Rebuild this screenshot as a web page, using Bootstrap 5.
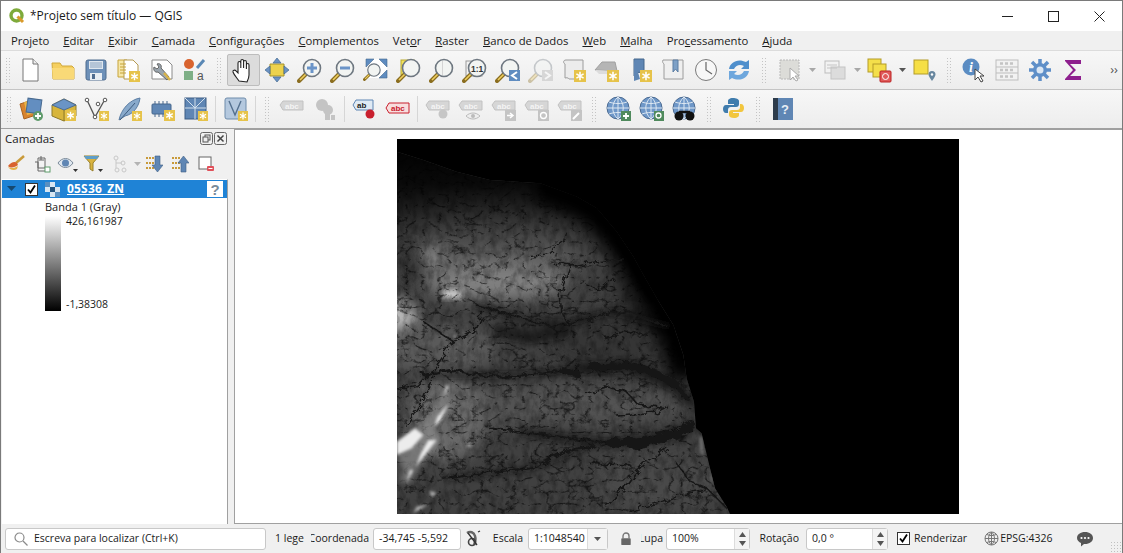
<!DOCTYPE html>
<html lang="pt">
<head>
  <meta charset="UTF-8">
  <title>*Projeto sem título — QGIS</title>
  <link href="https://cdn.jsdelivr.net/npm/bootstrap@5.3.0/dist/css/bootstrap.min.css" rel="stylesheet">
  <style>
    html, body { height: 100%; }
    body {
      background: #f0f0f0;
      font-family: "Open Sans", "Noto Sans", sans-serif;
      font-size: 11px;
      color: #1a1a1a;
      overflow: hidden;
    }
    .qgis-win { height: 553px; border: 1px solid #7a7a7a; border-bottom: 0; }
    .title-bar { height: 30px; background: #fff; font-size: 12px; }
    .title-bar .app-ico { margin: 0 5px 0 8px; }
    .win-btn { width: 46px; height: 30px; }
    .menu-bar { height: 20px; background: #f0f0f0; padding-left: 3px; border-bottom: 1px solid #dcdcdc; }
    .menu-bar .nav-link { padding: 0 7px; color: #1a1a1a; font-size: 11.3px; line-height: 20px; }
    .tool-row { background: linear-gradient(#f7f7f7, #ededed); border-bottom: 1px solid #c4c4c4; padding-left: 4px; }
    .row-one { height: 39px; }
    .row-two { height: 39px; border-bottom-color: #a0a0a0; padding-left: 5px; }
    .tbtn { width: 33px; height: 32px; flex: none; border: 1px solid transparent; border-radius: 2px; }
    .tbtn.on { background: #dcdcdc; border-color: #bdbdbd; }
    .tbtn.drop { width: 12px; }
    .grip { width: 7px; height: 26px; margin: 0 4px 0 5px; flex: none; background-image: radial-gradient(#c4c4c4 0.7px, transparent 0.8px); background-size: 3px 3px; }
    .grip.lone { margin-left: 0; margin-right: 1px; }
    .grip.wide { margin: 0 5px 0 6px; }
    .vsep { width: 1px; height: 26px; margin: 0 3px; background: #d6d6d6; flex: none; }
    .more-mark { color: #555; font-size: 13px; }
    .work-area { height: 395px; background: #f0f0f0; }
    .side-panel { width: 227px; flex: none; }
    .panel-head { height: 21px; padding: 0 1px 2px 4px; font-size: 11.5px; }
    .mini-ico { width: 13px; height: 13px; margin-left: 1px; }
    .panel-tools { height: 29px; padding: 0 0 2px 2px; }
    .panel-tools .tbtn { width: 26px; height: 24px; }
    .panel-tools .tbtn.drop { width: 8px; }
    .tree-box { background: #fff; border: 1px solid #a8a8a8; border-width: 1px 1px 0 1px; border-color: #fff #a0a0a0 #fff #f0f0f0; }
    .layer-row { height: 18px; background: #1f83d6; margin-bottom: 1px; padding-left: 5px; }
    .layer-tick { margin-left: 9px; }
    .layer-ico { margin-left: 7px; margin-right: 7px; }
    .layer-name { color: #fff; font-weight: 700; font-size: 12px; letter-spacing: .2px; text-decoration: underline; }
    .legend-title { margin-left: 43px; line-height: 15px; font-size: 11px; }
    .legend-body { margin: 2px 0 0 43px; }
    .ramp { width: 16px; height: 95px; background: linear-gradient(#fff, #000); }
    .ramp-labels { height: 95px; margin-left: 5px; font-size: 10.5px; line-height: 12px; margin-top: -1px; }
    .split-gap { width: 6px; flex: none; }
    .map-canvas { background: #fff; border: 1px solid #a0a0a0; border-width: 1px 0 1px 1px; padding-right: 1px; }
    .status-bar { height: 29px; background: #f0f0f0; font-size: 10.5px; padding-left: 4px; }
    .status-bar .form-control, .spin-box {
      height: 22px; padding: 0 5px; font-size: 10.5px; color: #1a1a1a;
      border: 1px solid #c8c8c8; border-radius: 3px; background: #fff; box-shadow: none; flex: none;
    }
    .locator { width: 261px; gap: 6px; color: #7a7a7a; padding-left: 8px !important; }
    .cut-label { overflow: hidden; white-space: nowrap; display: flex; justify-content: flex-end; flex: none; }
    .lege-label { width: 36px; margin-left: 9px; }
    .coord-label { width: 58px; }
    .coord-box { width: 88px; margin-left: 4px; }
    .render-ico { margin-left: 3px; }
    .escala-label { width: 30px; margin-left: 11px; }
    .escala-box { width: 80px; margin-left: 5px; }
    .lock-ico { margin-left: 12px; }
    .lupa-label { width: 22px; margin-left: 9px; }
    .lupa-box { width: 84px; margin-left: 3px; }
    .rot-label { width: 42px; margin-left: 7px; }
    .rot-box { width: 82px; margin-left: 7px; }
    .render-tick { margin-left: 9px; }
    .render-txt { margin-left: 4px; }
    .globe-ico { margin-left: 17px; margin-right: 1px; }
    .bubble-ico { margin-left: 24px; }
    .spin-box { display: flex; align-items: center; justify-content: space-between; padding-right: 0; }
    .spin-arrows { width: 15px; height: 20px; border-left: 1px solid #dcdcdc; background: #f4f4f4; }
    .combo-arrow { width: 20px; height: 20px; border-left: 1px solid #dcdcdc; background: #f4f4f4; }
    .tick-box { width: 13px; height: 13px; flex: none; border: 1px solid #333; background: #fff; }
    .size-grip { width: 12px; height: 12px; background-image: radial-gradient(#c0c0c0 0.7px, transparent 0.8px); background-size: 3px 3px; }
  </style>
</head>
<body>

<svg width="0" height="0" class="position-absolute">
  <defs>
    <symbol id="badge" viewBox="0 0 10 10">
      <rect width="10" height="10" fill="#e6c34a"/>
      <path d="M5 1.500v7M2 3.200l6 3.600M8 3.200l-6 3.600" stroke="#fff" stroke-width="1.300"/>
    </symbol>
    <symbol id="lens" viewBox="0 0 26 26">
      <path d="M9 17 2 24" stroke="#8a6d1f" stroke-width="4" stroke-linecap="round"/>
      <path d="M9 17 3 23" stroke="#f0d060" stroke-width="1.600"/>
      <circle cx="15" cy="11" r="8.500" fill="#f2f4f2" stroke="#6e7780" stroke-width="1.600"/>
    </symbol>
    <symbol id="abcgray" viewBox="0 0 26 26">
      <path d="M1 9 4 5h20v9H4z" fill="#d6d6d6" stroke="#c2c2c2"/>
      <text x="6" y="12.500" font-family="Liberation Sans, sans-serif" font-size="8" font-weight="700" fill="#f4f4f4">abc</text>
    </symbol>
    <symbol id="globe" viewBox="0 0 26 26">
      <circle cx="12" cy="12" r="11" fill="#6e97c8" stroke="#4d6c92"/>
      <path d="M1 12h22M12 1v22M12 1c-7 6-7 16 0 22M12 1c7 6 7 16 0 22M3 6c5 2 13 2 18 0M3 18c5-2 13-2 18 0" stroke="#dce7f2" fill="none"/>
    </symbol>
    <filter id="soft3" x="-40%" y="-40%" width="180%" height="180%"><feGaussianBlur stdDeviation="4"/></filter>
    <filter id="soft10" x="-40%" y="-40%" width="180%" height="180%"><feGaussianBlur stdDeviation="10"/></filter>
    <filter id="soft22" x="-60%" y="-60%" width="220%" height="220%"><feGaussianBlur stdDeviation="22"/></filter>
    <filter id="soft45" x="-60%" y="-60%" width="220%" height="220%"><feGaussianBlur stdDeviation="45"/></filter>
    <filter id="veins" x="0" y="0" width="100%" height="100%">
      <feTurbulence type="turbulence" baseFrequency="0.02 0.028" numOctaves="4" seed="11"/>
      <feColorMatrix values="0 0 0 0 0  0 0 0 0 0  0 0 0 0 0  -6 0 0 0 1.300"/>
      <feGaussianBlur stdDeviation="1.100"/>
    </filter>
    <filter id="grainy" x="0" y="0" width="100%" height="100%">
      <feTurbulence type="fractalNoise" baseFrequency="0.05 0.03" numOctaves="4" seed="8"/>
      <feColorMatrix values="0 0 0 0 0  0 0 0 0 0  0 0 0 0 0  2.200 0 0 0 -0.850"/>
    </filter>
    <filter id="wiggle" x="-10%" y="-10%" width="120%" height="120%">
      <feTurbulence type="fractalNoise" baseFrequency="0.04" numOctaves="4" seed="3" result="n"/>
      <feDisplacementMap in="SourceGraphic" in2="n" scale="24"/>
      <feGaussianBlur stdDeviation="2"/>
    </filter>
    <clipPath id="landClip">
      <path d="M21 50 100 75 200 110 300 135 450 145 560 185 620 220 680 290 730 365 760 420 800 490 850 570 880 660 890 730 912 800 918 880 935 895 960 1000 975 1060 1010 1115 1020 1137H21z"/>
    </clipPath>
    <linearGradient id="northFade" x1="0" y1="0" x2="0" y2="1">
      <stop offset="0" stop-color="#000"/>
      <stop offset=".12" stop-color="#000" stop-opacity=".85"/>
      <stop offset=".32" stop-color="#000" stop-opacity="0"/>
    </linearGradient>
  </defs>
</svg>

<div class="qgis-win d-flex flex-column">

  <!-- barra de titulo -->
  <div class="title-bar d-flex align-items-center">
    <svg class="app-ico" width="16" height="16" viewBox="0 0 16 16"><circle cx="7.500" cy="7.500" r="5.500" fill="none" stroke="#7eaa3b" stroke-width="3.400"/><path d="M8.500 8.500l5.500 5.500" stroke="#d99a2b" stroke-width="3"/></svg>
    <span>*Projeto sem título — QGIS</span>
    <div class="ms-auto d-flex">
      <div class="win-btn d-flex align-items-center justify-content-center"><svg width="11" height="11"><path d="M0 5.500h11" stroke="#222"/></svg></div>
      <div class="win-btn d-flex align-items-center justify-content-center"><svg width="11" height="11"><rect x=".5" y=".5" width="10" height="10" fill="none" stroke="#222"/></svg></div>
      <div class="win-btn d-flex align-items-center justify-content-center"><svg width="11" height="11"><path d="M.5.5l10 10M10.500.5l-10 10" stroke="#222"/></svg></div>
    </div>
  </div>

  <!-- menu -->
  <ul class="nav menu-bar flex-nowrap">
    <li class="nav-item"><a class="nav-link" href="#">Pro<u>j</u>eto</a></li>
    <li class="nav-item"><a class="nav-link" href="#"><u>E</u>ditar</a></li>
    <li class="nav-item"><a class="nav-link" href="#"><u>E</u>xibir</a></li>
    <li class="nav-item"><a class="nav-link" href="#"><u>C</u>amada</a></li>
    <li class="nav-item"><a class="nav-link" href="#"><u>C</u>onfigurações</a></li>
    <li class="nav-item"><a class="nav-link" href="#"><u>C</u>omplementos</a></li>
    <li class="nav-item"><a class="nav-link" href="#">Vet<u>o</u>r</a></li>
    <li class="nav-item"><a class="nav-link" href="#"><u>R</u>aster</a></li>
    <li class="nav-item"><a class="nav-link" href="#"><u>B</u>anco de Dados</a></li>
    <li class="nav-item"><a class="nav-link" href="#"><u>W</u>eb</a></li>
    <li class="nav-item"><a class="nav-link" href="#"><u>M</u>alha</a></li>
    <li class="nav-item"><a class="nav-link" href="#">Pro<u>c</u>essamento</a></li>
    <li class="nav-item"><a class="nav-link" href="#"><u>A</u>juda</a></li>
  </ul>

  <!-- barra de ferramentas 1 -->
  <div class="tool-row row-one d-flex align-items-center">
    <span class="grip lone"></span>
    <span class="tbtn d-flex align-items-center justify-content-center"><svg width="26" height="26" viewBox="0 0 26 26"><path d="M6 2h10l5 5v17H6z" fill="#fff" stroke="#777"/><path d="M16 2v5h5" fill="#eee" stroke="#777"/></svg></span>
    <span class="tbtn d-flex align-items-center justify-content-center"><svg width="26" height="26" viewBox="0 0 26 26"><path d="M2 6h8l2 3h10l2 2v11H3z" fill="#f5cf5f" stroke="#d0a83a"/><path d="M2 11h22v11H3z" fill="#f9d977"/></svg></span>
    <span class="tbtn d-flex align-items-center justify-content-center"><svg width="26" height="26" viewBox="0 0 26 26"><rect x="3" y="3" width="20" height="20" rx="2" fill="#6d90b8" stroke="#4f6c8f"/><rect x="6" y="4" width="14" height="8" fill="#dfe7ef"/><path d="M7 6h12M7 8h12M7 10h12" stroke="#8aa3bf"/><rect x="7" y="16" width="12" height="7" fill="#e8edf2"/><rect x="9" y="17" width="3" height="5" fill="#4f6c8f"/></svg></span>
    <span class="tbtn d-flex align-items-center justify-content-center"><svg width="26" height="26" viewBox="0 0 26 26"><path d="M2 3h9l2 3v14H2z" fill="#f6e7a8" stroke="#c6a33b"/><path d="M8 3h9l5 5v14H8z" fill="#fff" stroke="#b59a50"/><path d="M4 7h6M4 10h6M4 13h6M4 16h6" stroke="#c6a33b"/><use href="#badge" x="13" y="14" width="11" height="11"/></svg></span>
    <span class="tbtn d-flex align-items-center justify-content-center"><svg width="26" height="26" viewBox="0 0 26 26"><path d="M3 3h15l5 5v14H3z" fill="#fff" stroke="#8a8a8a"/><path d="M8 7c3-1 5 1 4 4l8 9-2 3-9-8c-3 1-5-2-4-5l3 2 2-2z" fill="#9aa5ae" stroke="#666"/><path d="M15 16l6 7" stroke="#d9b449" stroke-width="2.400"/></svg></span>
    <span class="tbtn d-flex align-items-center justify-content-center"><svg width="26" height="26" viewBox="0 0 26 26"><circle cx="7" cy="7" r="5" fill="#d8632e"/><rect x="2" y="14" width="9" height="9" fill="#7eaf86"/><path d="M15 11 22 3" stroke="#5a88b5" stroke-width="3"/><text x="15" y="23" font-family="Liberation Sans, sans-serif" font-size="12" fill="#555">a</text></svg></span>
    <span class="grip"></span>
    <span class="tbtn on d-flex align-items-center justify-content-center"><svg width="26" height="26" viewBox="0 0 26 26"><path d="M8 24c-2-3-5-6-6-9-.5-2 2-2.500 3-1l2 2V6c0-2 2.600-2 2.800 0v5-7c0-2 2.800-2 2.800 0v7-6c0-2 2.800-2 2.800 0v7-4c0-2 2.600-2 2.600 0v10c0 3-1 5-2 7z" fill="#fff" stroke="#222" stroke-width="1.100"/></svg></span>
    <span class="tbtn d-flex align-items-center justify-content-center"><svg width="26" height="26" viewBox="0 0 26 26"><path d="M6 7h14v12H6z" fill="#ecd24d" stroke="#a3912c"/><path d="M13 1l4 5H9zM13 25l-4-5h8zM1 13l5-4v8zM25 13l-5 4V9z" fill="#6b93c4" stroke="#44688f" stroke-width=".7"/></svg></span>
    <span class="tbtn d-flex align-items-center justify-content-center"><svg width="26" height="26" viewBox="0 0 26 26"><use href="#lens" width="26" height="26"/><path d="M10 11h10M15 6v10" stroke="#6a94c8" stroke-width="3"/></svg></span>
    <span class="tbtn d-flex align-items-center justify-content-center"><svg width="26" height="26" viewBox="0 0 26 26"><use href="#lens" width="26" height="26"/><path d="M10 11h10" stroke="#6a94c8" stroke-width="3"/></svg></span>
    <span class="tbtn d-flex align-items-center justify-content-center"><svg width="26" height="26" viewBox="0 0 26 26"><rect x="5" y="2" width="19" height="19" fill="#fff"/><path d="M3 2h8l-8 8zM24 2h-8l8 8zM24 21h-8l8-8z" fill="#5f8cc0" stroke="#44688f" stroke-width=".6"/><use href="#lens" x="0" y="5" width="19" height="19"/></svg></span>
    <span class="tbtn d-flex align-items-center justify-content-center"><svg width="26" height="26" viewBox="0 0 26 26"><rect x="5" y="3" width="13" height="15" fill="#f3e35c" stroke="#b7a72c"/><use href="#lens" width="26" height="26"/></svg></span>
    <span class="tbtn d-flex align-items-center justify-content-center"><svg width="26" height="26" viewBox="0 0 26 26"><use href="#lens" width="26" height="26"/><rect x="13" y="4" width="1" height="14" fill="#d4d4d4"/></svg></span>
    <span class="tbtn d-flex align-items-center justify-content-center"><svg width="26" height="26" viewBox="0 0 26 26"><rect x="4" y="4" width="16" height="15" fill="#f2f2f2" stroke="#9a9a9a"/><use href="#lens" width="26" height="26"/><text x="9" y="14.500" font-family="Liberation Sans, sans-serif" font-size="8.500" font-weight="700" fill="#333">1:1</text></svg></span>
    <span class="tbtn d-flex align-items-center justify-content-center"><svg width="26" height="26" viewBox="0 0 26 26"><use href="#lens" width="26" height="26"/><rect x="14" y="13" width="11" height="11" fill="#5f8cc0"/><path d="M22 15l-5 3.500 5 3.500" fill="none" stroke="#fff" stroke-width="2"/></svg></span>
    <span class="tbtn d-flex align-items-center justify-content-center"><svg width="26" height="26" viewBox="0 0 26 26" opacity=".35"><use href="#lens" width="26" height="26"/><rect x="14" y="13" width="11" height="11" fill="#a8a8a8"/><path d="M17 15l5 3.500-5 3.500" fill="none" stroke="#fff" stroke-width="2"/></svg></span>
    <span class="tbtn d-flex align-items-center justify-content-center"><svg width="26" height="26" viewBox="0 0 26 26"><path d="M5 3c-3 0-3 3-1 4v14c3-1 4 1 4 1h14V3z" fill="#ececec" stroke="#9c9c9c"/><use href="#badge" x="13" y="13" width="12" height="12"/></svg></span>
    <span class="tbtn d-flex align-items-center justify-content-center"><svg width="26" height="26" viewBox="0 0 26 26"><path d="M1 13 8 5h13l2 9z" fill="#b5b5b5" stroke="#a0a0a0"/><path d="M1 13l22 1v3H5z" fill="#dcdcdc"/><use href="#badge" x="13" y="13" width="12" height="12"/></svg></span>
    <span class="tbtn d-flex align-items-center justify-content-center"><svg width="26" height="26" viewBox="0 0 26 26"><path d="M7 2h10v17l-5-4-5 4z" fill="#5f86b4" stroke="#45668c"/><path d="M7 2v22l6-2" fill="#5f86b4"/><use href="#badge" x="13" y="13" width="12" height="12"/></svg></span>
    <span class="tbtn d-flex align-items-center justify-content-center"><svg width="26" height="26" viewBox="0 0 26 26"><path d="M3 3c-1 2 0 3 1 4v15h19V3z" fill="#efefef" stroke="#9c9c9c"/><path d="M13 3h5v12l-2.500-3-2.500 3z" fill="#7da0c6" stroke="#5b7da3"/></svg></span>
    <span class="tbtn d-flex align-items-center justify-content-center"><svg width="26" height="26" viewBox="0 0 26 26"><circle cx="13" cy="13" r="10.500" fill="#f7f7f7" stroke="#7b7b7b"/><path d="M13 5v8l6 4" fill="none" stroke="#666" stroke-width="1.200"/></svg></span>
    <span class="tbtn d-flex align-items-center justify-content-center"><svg width="26" height="26" viewBox="0 0 26 26"><path d="M3 12C4 5 12 1 20 5l3-2v9h-8l3-3c-4-2-8-1-10 3z" fill="#4f8fcc"/><path d="M23 14c-1 7-9 11-17 7l-3 2v-9h8l-3 3c4 2 8 1 10-3z" fill="#6ea7dd"/></svg></span>
    <span class="grip wide"></span>
    <span class="tbtn d-flex align-items-center justify-content-center"><svg width="26" height="26" viewBox="0 0 26 26"><rect x="3" y="3" width="19" height="19" fill="#dcdcd8" stroke="#b8b8b8" stroke-dasharray="2 1"/><path d="M13 11v12l3-3 3 4 2-1-3-4h4z" fill="#fff" stroke="#aaa"/></svg></span>
    <span class="tbtn drop d-flex align-items-center justify-content-center"><svg width="9" height="6" class="flex-shrink-0"><path d="M1 1h7L4.500 5z" fill="#a8a8a8"/></svg></span>
    <span class="tbtn d-flex align-items-center justify-content-center"><svg width="26" height="26" viewBox="0 0 26 26"><rect x="3" y="4" width="14" height="12" fill="#f2f2f2" stroke="#bdbdbd"/><rect x="9" y="10" width="14" height="12" fill="#dcdcdc" stroke="#c4c4c4"/><path d="M5 8h10M5 11h10" stroke="#c4c4c4"/></svg></span>
    <span class="tbtn drop d-flex align-items-center justify-content-center"><svg width="9" height="6" class="flex-shrink-0"><path d="M1 1h7L4.500 5z" fill="#a8a8a8"/></svg></span>
    <span class="tbtn d-flex align-items-center justify-content-center"><svg width="26" height="26" viewBox="0 0 26 26"><rect x="1" y="2" width="13" height="13" fill="#f4df4a" stroke="#b39c28"/><rect x="6" y="7" width="13" height="13" fill="#f4df4a" stroke="#b39c28"/><rect x="13" y="14" width="11" height="11" rx="1" fill="#e05a5a" stroke="#b22"/><circle cx="18.500" cy="19.500" r="3" fill="none" stroke="#fff"/></svg></span>
    <span class="tbtn drop d-flex align-items-center justify-content-center"><svg width="9" height="6" class="flex-shrink-0"><path d="M1 1h7L4.500 5z" fill="#555"/></svg></span>
    <span class="tbtn d-flex align-items-center justify-content-center"><svg width="26" height="26" viewBox="0 0 26 26"><rect x="2" y="3" width="14" height="14" fill="#f6df45" stroke="#b39c28"/><path d="M20 24c-2-3-3.500-5-3.500-6.500a3.500 3.500 0 0 1 7 0C23.500 19 22 21 20 24z" fill="#68879f"/><circle cx="20" cy="17.500" r="1.200" fill="#fff"/></svg></span>
    <span class="grip"></span>
    <span class="tbtn d-flex align-items-center justify-content-center"><svg width="26" height="26" viewBox="0 0 26 26"><circle cx="10" cy="10" r="8.500" fill="#5b8cc2"/><text x="8" y="15" font-family="Liberation Serif, serif" font-size="14" font-style="italic" font-weight="700" fill="#fff">i</text><path d="M14 12v11l3-3 3 5 2-1-3-5h4z" fill="#fff" stroke="#444"/></svg></span>
    <span class="tbtn d-flex align-items-center justify-content-center"><svg width="26" height="26" viewBox="0 0 26 26"><rect x="2" y="3" width="22" height="20" fill="#f2f2f2" stroke="#bdbdbd"/><path d="M2 10h22M2 16h22" stroke="#bdbdbd"/><path d="M6 6.500h14M6 13h14M6 19.500h14" stroke="#c4c4c4" stroke-width="2.500" stroke-dasharray="3 2"/></svg></span>
    <span class="tbtn d-flex align-items-center justify-content-center"><svg width="26" height="26" viewBox="0 0 26 26"><path d="M13 2v22M2 13h22M5 5l16 16M21 5 5 21" stroke="#5f8fc8" stroke-width="3.500"/><circle cx="13" cy="13" r="7" fill="#5f8fc8"/><circle cx="13" cy="13" r="3.500" fill="#dbe7f4"/></svg></span>
    <span class="tbtn d-flex align-items-center justify-content-center"><svg width="26" height="26" viewBox="0 0 26 26"><path d="M21 7V3H5v1l8 9-8 9v1h16v-4H10l6-6-6-6z" fill="#8e1f8e"/></svg></span>
    <span class="ms-auto more-mark pe-1">››</span>
  </div>

  <!-- barra de ferramentas 2 -->
  <div class="tool-row row-two d-flex align-items-center">
    <span class="grip lone"></span>
    <span class="tbtn d-flex align-items-center justify-content-center"><svg width="26" height="26" viewBox="0 0 26 26"><path d="M2 8 14 4l4 15-12 4z" fill="#d8842f" stroke="#a86220"/><path d="M6 6l13-3 3 13-13 3z" fill="#f1c24a" opacity=".8"/><rect x="9" y="3" width="14" height="14" fill="#638ec0" stroke="#47698f" transform="rotate(8 16 10)"/><circle cx="20" cy="20" r="5" fill="#5f9b6b"/><path d="M17 20h6M20 17v6" stroke="#fff" stroke-width="1.800"/></svg></span>
    <span class="tbtn d-flex align-items-center justify-content-center"><svg width="26" height="26" viewBox="0 0 26 26"><path d="M13 3 25 9v11l-12 5-12-5V9z" fill="#d7b53c" stroke="#8d7a2a"/><path d="M13 3 25 9l-12 5L1 9z" fill="#6a94c6" stroke="#4d6c92"/><path d="M13 14v11" stroke="#8d7a2a"/><use href="#badge" x="14" y="14" width="11" height="11"/></svg></span>
    <span class="tbtn d-flex align-items-center justify-content-center"><svg width="26" height="26" viewBox="0 0 26 26"><path d="M3 4 11 21 20 5" fill="none" stroke="#555" stroke-width="1.300"/><circle cx="3" cy="4" r="1.800" fill="#fff" stroke="#555"/><circle cx="11" cy="21" r="1.800" fill="#fff" stroke="#555"/><circle cx="14" cy="8" r="1.800" fill="#fff" stroke="#555"/><circle cx="21" cy="4" r="1.800" fill="#fff" stroke="#555"/><use href="#badge" x="15" y="15" width="10" height="10"/></svg></span>
    <span class="tbtn d-flex align-items-center justify-content-center"><svg width="26" height="26" viewBox="0 0 26 26"><path d="M2 24C4 14 12 4 23 2c-1 8-6 16-15 18z" fill="#88a9cb" stroke="#5b7da3"/><path d="M3 24 18 7" stroke="#3f5d80"/><use href="#badge" x="15" y="15" width="10" height="10"/></svg></span>
    <span class="tbtn d-flex align-items-center justify-content-center"><svg width="26" height="26" viewBox="0 0 26 26"><rect x="2" y="8" width="19" height="10" rx="1" fill="#5f86b4" stroke="#46678c"/><path d="M5 5v3M9 5v3M13 5v3M17 5v3M5 18v3M9 18v3M13 18v3" stroke="#46678c"/><use href="#badge" x="14" y="14" width="11" height="11"/></svg></span>
    <span class="tbtn d-flex align-items-center justify-content-center"><svg width="26" height="26" viewBox="0 0 26 26"><rect x="2" y="2" width="21" height="21" fill="#5f86b4" stroke="#3d5d83"/><path d="M12 2v21M2 12h21M2 2l10 10M22 2 12 12" stroke="#d4e0ec"/><use href="#badge" x="15" y="15" width="10" height="10"/></svg></span>
    <span class="vsep"></span>
    <span class="tbtn d-flex align-items-center justify-content-center"><svg width="26" height="26" viewBox="0 0 26 26"><rect x="2" y="2" width="21" height="21" rx="2" fill="#b4c8de" stroke="#6f8cab"/><path d="M6 5l6 14 6-14" fill="none" stroke="#54708f" stroke-width="1.400"/><use href="#badge" x="15" y="15" width="10" height="10"/></svg></span>
    <span class="vsep"></span>
    <span class="grip"></span>
    <span class="tbtn d-flex align-items-center justify-content-center"><svg width="26" height="26" viewBox="0 0 26 26"><use href="#abcgray" width="26" height="26"/></svg></span>
    <span class="tbtn d-flex align-items-center justify-content-center"><svg width="26" height="26" viewBox="0 0 26 26" fill="#c4c4c4"><circle cx="10" cy="9" r="6"/><circle cx="16" cy="14" r="5"/><rect x="13" y="18" width="5" height="6"/><rect x="19" y="19" width="4" height="5"/></svg></span>
    <span class="vsep"></span>
    <span class="tbtn d-flex align-items-center justify-content-center"><svg width="26" height="26" viewBox="0 0 26 26"><path d="M1 9 4 4h17v10H4z" fill="#dfeaf4" stroke="#5f86b4"/><text x="5" y="12" font-family="Liberation Sans, sans-serif" font-size="8" font-weight="700" fill="#222">ab</text><circle cx="18" cy="18" r="4.500" fill="#c9202e"/></svg></span>
    <span class="tbtn d-flex align-items-center justify-content-center"><svg width="26" height="26" viewBox="0 0 26 26"><path d="M1 12 4 7h20v10H4z" fill="#f7dede" stroke="#c9202e"/><text x="6" y="15" font-family="Liberation Sans, sans-serif" font-size="8" font-weight="700" fill="#c9202e">abc</text></svg></span>
    <span class="vsep"></span>
    <span class="tbtn d-flex align-items-center justify-content-center"><svg width="26" height="26" viewBox="0 0 26 26"><use href="#abcgray" width="26" height="26"/><circle cx="18" cy="18" r="4.500" fill="#c6c6c6"/></svg></span>
    <span class="tbtn d-flex align-items-center justify-content-center"><svg width="26" height="26" viewBox="0 0 26 26"><use href="#abcgray" width="26" height="26"/><path d="M8 20c4-4 10-4 14 0-4 4-10 4-14 0z" fill="#eee" stroke="#bbb"/><circle cx="15" cy="20" r="2" fill="#bbb"/></svg></span>
    <span class="tbtn d-flex align-items-center justify-content-center"><svg width="26" height="26" viewBox="0 0 26 26"><use href="#abcgray" width="26" height="26"/><rect x="14" y="14" width="11" height="11" fill="#c4c4c4"/><path d="M16 19.500h5M19 17l3 2.500-3 2.500" fill="none" stroke="#fff" stroke-width="1.500"/></svg></span>
    <span class="tbtn d-flex align-items-center justify-content-center"><svg width="26" height="26" viewBox="0 0 26 26"><use href="#abcgray" width="26" height="26"/><rect x="14" y="14" width="11" height="11" fill="#c4c4c4"/><circle cx="19.500" cy="19.500" r="3" fill="none" stroke="#fff" stroke-width="1.300"/></svg></span>
    <span class="tbtn d-flex align-items-center justify-content-center"><svg width="26" height="26" viewBox="0 0 26 26"><use href="#abcgray" width="26" height="26"/><rect x="14" y="14" width="11" height="11" fill="#c4c4c4"/><path d="M16 23l6-6" stroke="#fff" stroke-width="2"/></svg></span>
    <span class="grip"></span>
    <span class="tbtn d-flex align-items-center justify-content-center"><svg width="26" height="26" viewBox="0 0 26 26"><use href="#globe" width="26" height="26"/><rect x="15" y="15" width="10" height="10" fill="#4f8a5d"/><path d="M17 20h6M20 17v6" stroke="#fff" stroke-width="1.800"/></svg></span>
    <span class="tbtn d-flex align-items-center justify-content-center"><svg width="26" height="26" viewBox="0 0 26 26"><use href="#globe" width="26" height="26"/><rect x="15" y="15" width="10" height="10" fill="#4f8a5d"/><circle cx="19.500" cy="19.500" r="2.500" fill="none" stroke="#fff" stroke-width="1.300"/></svg></span>
    <span class="tbtn d-flex align-items-center justify-content-center"><svg width="26" height="26" viewBox="0 0 26 26"><use href="#globe" width="26" height="26"/><circle cx="7" cy="20" r="4.500" fill="#111"/><circle cx="18" cy="20" r="4.500" fill="#111"/><path d="M7 16h11" stroke="#111" stroke-width="2.500"/></svg></span>
    <span class="grip"></span>
    <span class="tbtn d-flex align-items-center justify-content-center"><svg width="26" height="26" viewBox="0 0 26 26"><path d="M12 2c-4 0-5 2-5 3v3h6v1H5c-2 0-3 2-3 4s1 4 3 4h2v-3c0-2 1-3 3-3h5c2 0 3-1 3-3V5c0-2-3-3-6-3z" fill="#3f7cad"/><path d="M13 22c4 0 5-2 5-3v-2h-6v-1h8c2 0 3-2 3-4s-1-4-3-4h-1v3c0 2-1 3-3 3h-5c-2 0-3 1-3 3v2c0 2 2 3 5 3z" fill="#f2c63e"/></svg></span>
    <span class="grip"></span>
    <span class="tbtn d-flex align-items-center justify-content-center"><svg width="26" height="26" viewBox="0 0 26 26"><rect x="3" y="2" width="20" height="22" fill="#5f86b4"/><rect x="3" y="2" width="5" height="22" fill="#2d3c4c"/><text x="11" y="18" font-family="Liberation Sans, sans-serif" font-size="13" font-weight="700" fill="#e8eef5">?</text></svg></span>
  </div>

  <!-- area central -->
  <div class="work-area d-flex">
    <div class="side-panel d-flex flex-column">
      <div class="panel-head d-flex align-items-center">
        <span>Camadas</span>
        <svg class="mini-ico ms-auto" viewBox="0 0 13 13"><rect x=".5" y=".5" width="12" height="12" rx="2" fill="none" stroke="#666"/><rect x="5" y="3" width="5" height="5" fill="none" stroke="#555"/><rect x="3" y="5" width="5" height="5" fill="#eee" stroke="#555"/></svg>
        <svg class="mini-ico" viewBox="0 0 13 13"><rect x=".5" y=".5" width="12" height="12" rx="2" fill="none" stroke="#666"/><path d="M3.500 3.500l6 6M9.500 3.500l-6 6" stroke="#444" stroke-width="1.500"/></svg>
      </div>
      <div class="panel-tools d-flex align-items-center">
        <span class="tbtn d-flex align-items-center justify-content-center"><svg width="18" height="18" viewBox="0 0 18 18"><path d="M17 1 9 8" stroke="#c99a3a" stroke-width="2.500"/><path d="M1 11c3-4 7-5 9-3l1 2c-3 2-7 4-10 1z" fill="#d8632e"/><path d="M1 12c3 2 7 1 10-1l-1 3c-3 2-7 1-9-2z" fill="#e4b34a"/></svg></span>
        <span class="tbtn d-flex align-items-center justify-content-center"><svg width="18" height="18" viewBox="0 0 18 18"><path d="M5 3h7v10H5zM2 7h3v9h8v-3" fill="#f3f3f3" stroke="#666"/><path d="M8 1v4M6 5h5" stroke="#666"/><rect x="12" y="12" width="5" height="5" fill="#fff" stroke="#5f9b6b"/></svg></span>
        <span class="tbtn d-flex align-items-center justify-content-center"><svg width="22" height="18" viewBox="0 0 22 18"><path d="M1 8c4-6 11-6 15 0-4 6-11 6-15 0z" fill="#dfe7ef" stroke="#7b8a99"/><circle cx="8.500" cy="8" r="3.500" fill="#5f86b4"/><path d="M16 14h5l-2.500 3z" fill="#333"/></svg></span>
        <span class="tbtn d-flex align-items-center justify-content-center"><svg width="22" height="18" viewBox="0 0 22 18"><path d="M1 1h15l-6 7v8l-3-2V8z" fill="#d9b33f" stroke="#98802b"/><path d="M1 1h15l-2 3H3z" fill="#5f9ec8"/><path d="M15 14h5l-2.500 3z" fill="#333"/></svg></span>
        <span class="tbtn d-flex align-items-center justify-content-center"><svg width="18" height="18" viewBox="0 0 18 18" fill="none" stroke="#c8c8c8"><circle cx="5" cy="3" r="2"/><path d="M5 5v8M5 8h6"/><circle cx="12" cy="8" r="2"/><circle cx="6" cy="15" r="2"/><circle cx="13" cy="15" r="2"/></svg></span>
        <span class="tbtn drop d-flex align-items-center justify-content-center"><svg width="9" height="6" class="flex-shrink-0"><path d="M1 1h7L4.500 5z" fill="#b4b4b4"/></svg></span>
        <span class="tbtn d-flex align-items-center justify-content-center"><svg width="18" height="18" viewBox="0 0 18 18"><path d="M1 3h8M1 8h8M1 13h8" stroke="#c89a3a" stroke-dasharray="2 1" stroke-width="2"/><path d="M10 1h5v9h3l-5.500 7L7 10h3z" fill="#5f86b4" stroke="#3f5f85" stroke-width=".6"/></svg></span>
        <span class="tbtn d-flex align-items-center justify-content-center"><svg width="18" height="18" viewBox="0 0 18 18"><path d="M1 3h8M1 8h8M1 13h8" stroke="#c89a3a" stroke-dasharray="2 1" stroke-width="2"/><path d="M10 17h5V8h3l-5.500-7L7 8h3z" fill="#5f86b4" stroke="#3f5f85" stroke-width=".6"/></svg></span>
        <span class="tbtn d-flex align-items-center justify-content-center"><svg width="18" height="18" viewBox="0 0 18 18"><rect x="2" y="2" width="12" height="12" fill="#fff" stroke="#666"/><rect x="10" y="11" width="7" height="5" rx="1" fill="#e0505a"/><path d="M11.500 13.500h4" stroke="#fff"/></svg></span>
      </div>
      <div class="tree-box flex-grow-1">
        <div class="layer-row d-flex align-items-center">
          <svg width="9" height="6"><path d="M0 0h9L4.500 5z" fill="#16486f"/></svg>
          <span class="tick-box layer-tick d-flex align-items-center justify-content-center"><svg width="11" height="11" viewBox="0 0 11 11"><path d="M2 5.500l2.500 3L9 1.500" fill="none" stroke="#000" stroke-width="1.800"/></svg></span>
          <svg class="layer-ico" width="15" height="15" viewBox="0 0 15 15"><g fill="#23527c"><rect x="5" y="0" width="5" height="5" fill="#d8e6f2"/><rect x="0" y="5" width="5" height="5" fill="#d8e6f2"/><rect x="5" y="5" width="5" height="5"/><rect x="10" y="5" width="5" height="5" fill="#d8e6f2"/><rect x="5" y="10" width="5" height="5" fill="#d8e6f2"/><rect x="0" y="0" width="5" height="5" fill="#5a8fc0"/><rect x="10" y="10" width="5" height="5" fill="#5a8fc0"/></g></svg>
          <span class="layer-name">05S36_ZN</span>
          <span class="ms-auto me-1 bg-white d-flex align-items-center justify-content-center"><svg width="16" height="16" viewBox="0 0 16 16"><text x="3.500" y="13.500" font-family="Liberation Sans, sans-serif" font-size="15" font-weight="700" fill="#7a8b99">?</text></svg></span>
        </div>
        <div class="legend-title">Banda 1 (Gray)</div>
        <div class="legend-body d-flex">
          <div class="ramp"></div>
          <div class="ramp-labels d-flex flex-column justify-content-between">
            <span>426,161987</span>
            <span>-1,38308</span>
          </div>
        </div>
      </div>
    </div>
    <div class="split-gap"></div>

    <!-- mapa raster -->
    <div class="map-canvas flex-grow-1 d-flex align-items-center justify-content-center">
      <svg width="562" height="375" viewBox="21 12 1686 1125">
        <rect x="21" y="12" width="1686" height="1125" fill="#000"/>
        <g clip-path="url(#landClip)">
          <rect x="21" y="12" width="1100" height="1125" fill="#404040"/>
          <ellipse cx="300" cy="340" rx="270" ry="140" fill="#5e5e5e" filter="url(#soft45)"/>
          <ellipse cx="320" cy="440" rx="210" ry="50" fill="#808080" filter="url(#soft22)"/>
          <ellipse cx="125" cy="360" rx="40" ry="26" fill="#8e8e8e" filter="url(#soft22)"/>
          <ellipse cx="185" cy="478" rx="36" ry="12" fill="#dedede" filter="url(#soft10)"/>
          <ellipse cx="21" cy="560" rx="60" ry="65" fill="#c0c0c0" filter="url(#soft22)"/>
          <ellipse cx="55" cy="390" rx="35" ry="70" fill="#333" filter="url(#soft22)"/>
          <ellipse cx="130" cy="640" rx="200" ry="70" fill="#5a5a5a" filter="url(#soft22)"/>
          <ellipse cx="480" cy="810" rx="400" ry="60" fill="#525252" filter="url(#soft22)"/>
          <ellipse cx="170" cy="850" rx="120" ry="130" fill="#686868" filter="url(#soft22)"/>
          <ellipse cx="800" cy="1040" rx="190" ry="80" fill="#484848" filter="url(#soft22)"/>
          <ellipse cx="680" cy="620" rx="200" ry="90" fill="#353535" filter="url(#soft22)"/>
          <rect x="21" y="12" width="1100" height="1125" filter="url(#grainy)" opacity=".3"/>
          <rect x="21" y="12" width="1100" height="1125" filter="url(#veins)" opacity=".55"/>

          <!-- escurece o norte e a costa -->
          <rect x="21" y="12" width="1100" height="1125" fill="url(#northFade)"/>
          <path d="M450 145 560 185 620 220 680 290 730 365 760 420 800 490 850 570 880 660 890 730" fill="none" stroke="#000" stroke-width="110" filter="url(#soft22)"/>
          <path d="M450 145 560 185 620 220 680 290 730 365 760 420 800 490" fill="none" stroke="#000" stroke-width="40" filter="url(#soft10)"/>
          <path d="M650 340 760 500 860 640 700 540z" fill="#000" opacity=".35" filter="url(#soft22)"/>

          <!-- vales largos -->
          <g fill="none" stroke="#111" stroke-linecap="round" stroke-linejoin="round" filter="url(#soft10)" opacity=".6">
            <path stroke-width="22" d="M260 510 400 555 530 566 660 530 830 572"/>
            <path stroke-width="45" d="M330 590 420 605 520 590"/>
            <path stroke-width="20" d="M100 720 280 722 430 716 560 700"/>
            <path stroke-width="40" d="M560 700 720 695 860 755 900 800"/>
            <path stroke-width="28" d="M400 892 650 925 850 900 910 870"/>
            <path stroke-width="16" d="M180 1030 430 1000 610 930"/>
          </g>

          <!-- drenagem -->
          <g fill="none" stroke="#141414" stroke-linecap="round" stroke-linejoin="round" filter="url(#wiggle)">
            <path stroke-width="5" d="M260 510 330 530 400 550 480 572 530 566 600 550 660 530 720 530 780 560 830 572"/>
            <path stroke-width="4" d="M530 295 520 320 480 355 420 365M490 385 560 390 620 380 700 372M540 392 510 480 515 530 535 570"/>
            <path stroke-width="4" d="M590 450 630 465 670 430M640 610 700 590 770 600"/>
            <path stroke-width="22" d="M600 692 640 698 720 692 790 712 860 752"/>
            <path stroke-width="12" d="M860 752 890 790"/>
            <path stroke-width="6" d="M100 720 180 705 280 722 360 726 430 716 490 708 550 716 570 692"/>
            <path stroke-width="22" d="M520 708 560 715"/>
            <path stroke-width="4.500" d="M590 775 650 755 710 772 745 810 820 820M680 840 800 832 830 815"/>
            <path stroke-width="5" d="M300 880 400 892 550 910 650 925"/>
            <path stroke-width="28" d="M660 920 750 925 850 900 905 872"/>
            <path stroke-width="6" d="M180 1030 300 1010 430 1000 520 950 610 930"/>
            <path stroke-width="5" d="M830 940 760 985 700 1060 650 1115M600 985 720 990"/>
            <path stroke-width="4" d="M720 1130 870 1082 950 1060 1010 1120M860 985 900 1040 950 1060"/>
            <path stroke-width="4" d="M21 760 80 752 112 720M130 722 100 790 50 870M100 560 190 620 120 720M280 530 250 590 190 620"/>
          </g>

          <!-- manchas claras a sudoeste -->
          <path d="M170 750 150 800 90 880 21 915 21 965 40 1000 30 1050 60 1040 110 960 160 920 130 880 180 810z" fill="#8c8c8c" filter="url(#soft10)" opacity=".7"/>
          <g fill="#ececec" filter="url(#soft3)">
            <path d="M21 920 75 880 100 900 65 940 21 960z"/>
            <path d="M168 752 176 752 162 785zM176 805 152 855 132 875 142 845zM115 915 140 915 105 960 78 995 90 960zM60 1005 70 1005 48 1045z"/>
            <path d="M118 1068 142 1075 125 1085zM80 1115 115 1108 70 1135z" fill="#bbb"/>
            <path d="M928 905 936 905 942 965 932 955zM962 1010 968 1030 964 1055z" fill="#777"/>
            <circle cx="238" cy="930" r="6" fill="#aaa"/>
            <circle cx="195" cy="605" r="3" fill="#ddd"/>
          </g>
        </g>
      </svg>
    </div>
  </div>

  <!-- barra de status -->
  <div class="status-bar d-flex align-items-center">
    <div class="form-control locator d-flex align-items-center">
      <svg width="14" height="14" viewBox="0 0 14 14" fill="none" stroke="#8a8a8a" stroke-width="1.200" class="flex-shrink-0"><circle cx="5.500" cy="5.500" r="4.500"/><path d="M9 9l4.500 4.500"/></svg>
      <span>Escreva para localizar (Ctrl+K)</span>
    </div>
    <span class="lege-label">1 lege</span>
    <span class="cut-label coord-label">Coordenada</span>
    <div class="form-control coord-box d-flex align-items-center">-34,745 -5,592</div>
    <svg class="render-ico flex-shrink-0" width="18" height="18" viewBox="0 0 18 18"><path d="M3 3c3-2 7-1 8 3 1 3 0 7-1 9" fill="none" stroke="#666" stroke-width="2.400"/><circle cx="8" cy="12" r="3.500" fill="none" stroke="#444" stroke-width="1.600"/><path d="M4 3l9 12M14 2l2-1" stroke="#333" stroke-width="1.300"/></svg>
    <span class="cut-label escala-label">Escala</span>
    <div class="spin-box escala-box"><span>1:1048540</span><span class="combo-arrow d-flex align-items-center justify-content-center"><svg width="9" height="6"><path d="M1 1h7L4.500 5z" fill="#555"/></svg></span></div>
    <svg class="lock-ico flex-shrink-0" width="12" height="16" viewBox="0 0 14 16"><path d="M3.500 7V4.500a3.500 3.500 0 0 1 7 0V7" fill="none" stroke="#777" stroke-width="1.600"/><rect x="1.500" y="7" width="11" height="8" rx="1" fill="#666"/></svg>
    <span class="cut-label lupa-label">Lupa</span>
    <div class="spin-box lupa-box"><span>100%</span><span class="spin-arrows d-flex flex-column align-items-center justify-content-center gap-1"><svg width="9" height="5" class="d-block"><path d="M1 5h7L4.500 0z" fill="#555"/></svg><svg width="9" height="5" class="d-block"><path d="M1 0h7L4.500 5z" fill="#555"/></svg></span></div>
    <span class="cut-label rot-label">Rotação</span>
    <div class="spin-box rot-box"><span>0,0 °</span><span class="spin-arrows d-flex flex-column align-items-center justify-content-center gap-1"><svg width="9" height="5" class="d-block"><path d="M1 5h7L4.500 0z" fill="#555"/></svg><svg width="9" height="5" class="d-block"><path d="M1 0h7L4.500 5z" fill="#555"/></svg></span></div>
    <span class="tick-box render-tick d-flex align-items-center justify-content-center"><svg width="11" height="11" viewBox="0 0 11 11"><path d="M2 5.500l2.500 3L9 1.500" fill="none" stroke="#000" stroke-width="1.800"/></svg></span>
    <span class="render-txt">Renderizar</span>
    <svg class="globe-ico flex-shrink-0" width="15" height="15" viewBox="0 0 15 15" fill="none" stroke="#777"><circle cx="7.500" cy="7.500" r="6.500"/><path d="M1 7.500h13M7.500 1v13M3 3.500c3 1.500 6 1.500 9 0M3 11.500c3-1.500 6-1.500 9 0M7.500 1c-4 4-4 9 0 13M7.500 1c4 4 4 9 0 13"/></svg>
    <span>EPSG:4326</span>
    <svg class="bubble-ico flex-shrink-0" width="18" height="16" viewBox="0 0 18 16"><path d="M9 1c4.500 0 8 2.500 8 6s-3.500 6-8 6l-1 0-3 2.500V12C3 11 1 9.500 1 7c0-3.500 3.500-6 8-6z" fill="#555"/><circle cx="5.500" cy="7" r="1.100" fill="#fff"/><circle cx="9" cy="7" r="1.100" fill="#fff"/><circle cx="12.500" cy="7" r="1.100" fill="#fff"/></svg>
    <div class="size-grip ms-auto align-self-end"></div>
  </div>
</div>

<script src="https://cdn.jsdelivr.net/npm/bootstrap@5.3.0/dist/js/bootstrap.bundle.min.js"></script>
</body>
</html>
